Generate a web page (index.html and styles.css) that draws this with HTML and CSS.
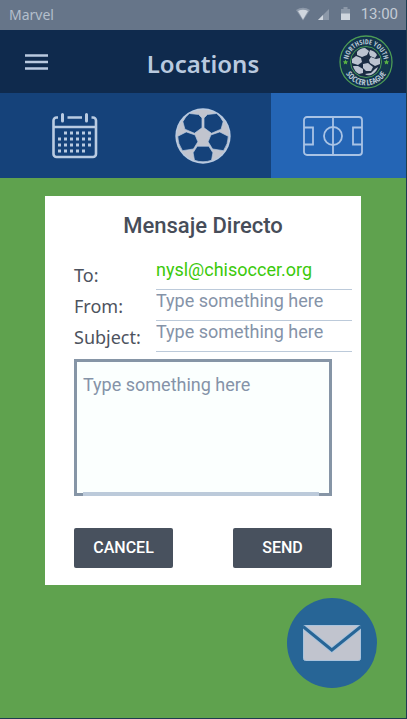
FILE: index.html
```html
<!DOCTYPE html>
<html lang="en">
<head>
<meta charset="utf-8">
<meta name="viewport" content="width=device-width, initial-scale=1">
<title>Locations</title>
<link rel="stylesheet" href="styles.css">
</head>
<body>
<div class="app">
  <div class="status">
    <span class="carrier">Marvel</span>
    <svg class="status-icons" width="56" height="14" viewBox="0 0 56 14" aria-hidden="true">
      <path d="M0 3Q7-1.500 14 3L7 13.500Z" fill="#8c98a8"/>
      <path d="M2 4Q7 1.500 12 4L7 12.500Z" fill="#d0d6de"/>
      <path d="M33 2V13H22Z" fill="#8c98a8"/>
      <path d="M27 8V13H22Z" fill="#d0d6de"/>
      <path d="M45 2h2.500V0h4v2H54v5h-9z" fill="#8c98a8"/>
      <path d="M45 6.500h9V13h-9z" fill="#d0d6de"/>
    </svg>
    <time class="clock">13:00</time>
  </div>

  <header class="header">
    <button class="menu" type="button" aria-label="Menu">
      <svg width="23" height="16" viewBox="0 0 23 16"><path d="M0 1.500h23M0 8h23M0 14.500h23" stroke="#b9c9df" stroke-width="2.500"/></svg>
    </button>
    <h1 class="heading">Locations</h1>
    <svg class="logo" width="54" height="54" viewBox="0 0 54 54" role="img" aria-label="Northside Youth Soccer League">
      <defs>
        <path id="arc-top" d="M10.124 32.483a17.750 17.750 0 1 1 33.752 0"/>
        <path id="arc-bottom" d="M3.600 27a23.400 23.400 0 0 0 46.800 0"/>
      </defs>
      <circle cx="27" cy="27" r="26" fill="#13364d" stroke="#4c9b55" stroke-width="1.300"/>
      <circle cx="27" cy="27" r="24.500" fill="none" stroke="#123150" stroke-width="1"/>
      <text class="logo-text logo-text-top"><textPath href="#arc-top" startOffset="50%" text-anchor="middle">NORTHSIDE YOUTH</textPath></text>
      <text class="logo-text"><textPath href="#arc-bottom" startOffset="50%" text-anchor="middle">SOCCER LEAGUE</textPath></text>
      <circle cx="27" cy="27" r="15.500" fill="#16304c" stroke="#4c9b55" stroke-width="1"/>
      <circle cx="27" cy="27" r="14" fill="#1b2c43"/>
      <g fill="#bcc3d0">
        <path d="M18 17Q21 13 26 13L30 16L28 20L23 22L18 20Z"/>
        <path d="M31 15Q36 16 38 20L36 23L31 21L30 18Z"/>
        <path d="M13 24L17 21L22 23L23 27L19 30L13 28Z"/>
        <path d="M32 22L37 24L41 23L41 29L36 31L31 28L30 25Z"/>
        <path d="M14 31L19 31L24 34L24 38L20 39Q15 36 14 31Z"/>
        <path d="M24 29L29 28L34 32L32 36L27 36L24 33Z"/>
        <path d="M26 39L32 38L36 34L39 32Q37 38 32 40Q28 41 26 39Z"/>
      </g>
      <path id="star" d="M6.500 24.500l.8 1.700 1.900.2-1.400 1.300.4 1.900-1.700-1-1.700 1 .4-1.900-1.400-1.300 1.900-.2z" fill="#5bb544"/>
      <use href="#star" x="41"/>
    </svg>
  </header>

  <nav class="tabs">
    <a class="tab tab-first" href="#calendar" aria-label="Calendar">
      <svg width="46" height="46" viewBox="0 0 46 46" fill="none" stroke="#b9cbe2" stroke-width="2.600">
        <path d="M6 4.500H4.500a3 3 0 0 0-3 3V41a3 3 0 0 0 3 3H41a3 3 0 0 0 3-3V7.500a3 3 0 0 0-3-3H39.500M15.500 4.500H30M1.500 14H44" />
        <path d="M10.500 1.500v6.500M34.500 1.500v6.500" stroke-width="3" stroke-linecap="round"/>
        <path d="M12 20h28M6 26h34M6 32h34M6 38h28" stroke-width="3" stroke-dasharray="3"/>
      </svg>
    </a>
    <a class="tab" href="#games" aria-label="Games">
      <svg width="56" height="56" viewBox="80 57 164 164">
        <circle cx="162" cy="139" r="81" fill="#b9cbe2"/>
        <circle cx="162" cy="139" r="77" fill="#c1c4ce"/>
        <g id="ball-side">
          <path d="M103 97Q110 82 122 73L149 76L159 86V115L137 131L109 119Z" fill="#15427a" stroke="#b9cbe2" stroke-width="2"/>
          <path d="M88 140L113 127L139 136L147 156L134 177L102 182Q88 162 88 140Z" fill="#15427a" stroke="#b9cbe2" stroke-width="2"/>
        </g>
        <use href="#ball-side" transform="matrix(-1 0 0 1 324 0)"/>
        <path d="M133 188L145 169H179L191 188L187 210Q162 219 137 210Z" fill="#15427a" stroke="#b9cbe2" stroke-width="2"/>
      </svg>
    </a>
    <a class="tab tab-last" href="#locations" aria-label="Locations" aria-current="page">
      <svg width="60" height="40" viewBox="0 0 60 40" fill="none" stroke="#a9c3e5" stroke-width="1.800">
        <rect x="1" y="1" width="58" height="38" rx="3"/>
        <path d="M30 1v38M1 11.500h9v17H1M59 11.500h-9v17h9"/>
        <circle cx="30" cy="20" r="9"/>
      </svg>
    </a>
  </nav>

  <main class="content">
    <form class="card">
      <h2 class="title">Mensaje Directo</h2>
      <div class="fields">
        <label class="label" for="to">To:</label>
        <input class="input input-to" id="to" type="email" value="nysl@chisoccer.org">
        <label class="label" for="from">From:</label>
        <input class="input" id="from" type="text" placeholder="Type something here">
        <label class="label" for="subject">Subject:</label>
        <input class="input" id="subject" type="text" placeholder="Type something here">
      </div>
      <div class="message">
        <textarea class="textarea" aria-label="Message" placeholder="Type something here"></textarea>
      </div>
      <div class="actions">
        <button class="button" type="button">CANCEL</button>
        <button class="button" type="submit">SEND</button>
      </div>
    </form>
    <button class="fab" type="button" aria-label="New message">
      <svg width="58" height="36" viewBox="0 0 58 36">
        <rect x=".5" y=".5" width="57" height="35" rx="2" fill="#c1c4ce" stroke="#a9c3dc"/>
        <path d="M0 1.500L28.800 25L58 1.500" fill="none" stroke="#a9c3dc" stroke-width="5"/>
        <path d="M0 1.500L28.800 25L58 1.500" fill="none" stroke="#276596" stroke-width="3"/>
      </svg>
    </button>
  </main>
</div>
</body>
</html>
```
FILE: styles.css
```css
* {
  box-sizing: border-box;
}

body {
  margin: 0;
  font-family: Roboto, "Liberation Sans", sans-serif;
}

button {
  border: 0;
  padding: 0;
  cursor: pointer;
}

svg {
  display: block;
}

.app {
  display: flex;
  flex-direction: column;
  min-height: 100vh;
  border: solid #1d3c50;
  border-width: 0 1px 1px 0;
  background: #5fa24e;
}

.status {
  display: flex;
  align-items: center;
  height: 30px;
  padding: 0 8px 2px 9px;
  background: #667589;
  color: #b4bfcc;
  font-size: 15px;
}

.carrier {
  margin-right: auto;
  font-family: "Noto Sans", sans-serif;
  font-size: 14px;
}

.clock {
  margin-left: 9px;
  color: #c3cbd5;
}

.header {
  display: grid;
  grid-template-columns: 1fr auto 1fr;
  align-items: center;
  height: 63px;
  padding: 0 13px 0 25px;
  background: #0f2a4d;
}

.menu {
  justify-self: start;
  background: none;
}

.heading {
  margin: 4px 0 0 -12px;
  color: #b9c9df;
  font: 600 24px/32px "Noto Sans", sans-serif;
}

.logo {
  justify-self: end;
}

.logo-text {
  fill: #b9c7d6;
  font: 700 8px "Open Sans", sans-serif;
  font-stretch: 75%;
}

.logo-text-top {
  font-size: 7px;
}

.tabs {
  display: grid;
  grid-template-columns: repeat(3, 1fr);
  height: 85px;
  background: #15427a;
}

.tab {
  display: flex;
  align-items: center;
  justify-content: center;
}

.tab-first {
  padding-left: 14px;
}

.tab-last {
  padding-right: 10px;
  background: #2465b5;
}

.content {
  display: flex;
  flex-direction: column;
  padding: 18px 29px 29px 45px;
}

.card {
  margin-right: 16px;
  padding: 14px 29px 17px;
  background: #fff;
}

.title {
  margin: 0 0 17px;
  color: #474d59;
  font-size: 22px;
  font-weight: 500;
  line-height: 32px;
  text-align: center;
}

.fields {
  display: grid;
  grid-template-columns: 82px 1fr;
  margin-right: -20px;
}

.label {
  padding-top: 2px;
  color: #4d535e;
  font: 18px/29px "Noto Sans", sans-serif;
}

.input {
  width: 100%;
  min-width: 0;
  height: 31px;
  border: 0;
  border-bottom: 1px solid #bccada;
  border-radius: 0;
  padding: 0 0 10px;
  background: none;
  color: #474d59;
  font: 18px/20px Roboto, sans-serif;
}

.input-to {
  color: #3bc90b;
}

.input::placeholder,
.textarea::placeholder {
  color: #8593a8;
  opacity: 1;
}

.message {
  position: relative;
  margin-top: 7px;
}

.message::after {
  content: "";
  position: absolute;
  right: 13px;
  bottom: 0;
  left: 9px;
  height: 4px;
  background: #bccada;
}

.textarea {
  display: block;
  width: 100%;
  height: 137px;
  border: 3px solid #8695a6;
  border-radius: 0;
  padding: 12px 6px;
  background: #fbfffe;
  font: 18px/22px Roboto, sans-serif;
  resize: none;
}

.actions {
  display: flex;
  justify-content: space-between;
  margin-top: 32px;
}

.button {
  width: 99px;
  height: 40px;
  border-radius: 2px;
  background: #48515e;
  color: #fff;
  font: 500 16px/20px Roboto, sans-serif;
}

.fab {
  display: flex;
  align-items: center;
  justify-content: center;
  align-self: flex-end;
  width: 90px;
  height: 90px;
  margin-top: 13px;
  border-radius: 50%;
  background: #276596;
}
```
